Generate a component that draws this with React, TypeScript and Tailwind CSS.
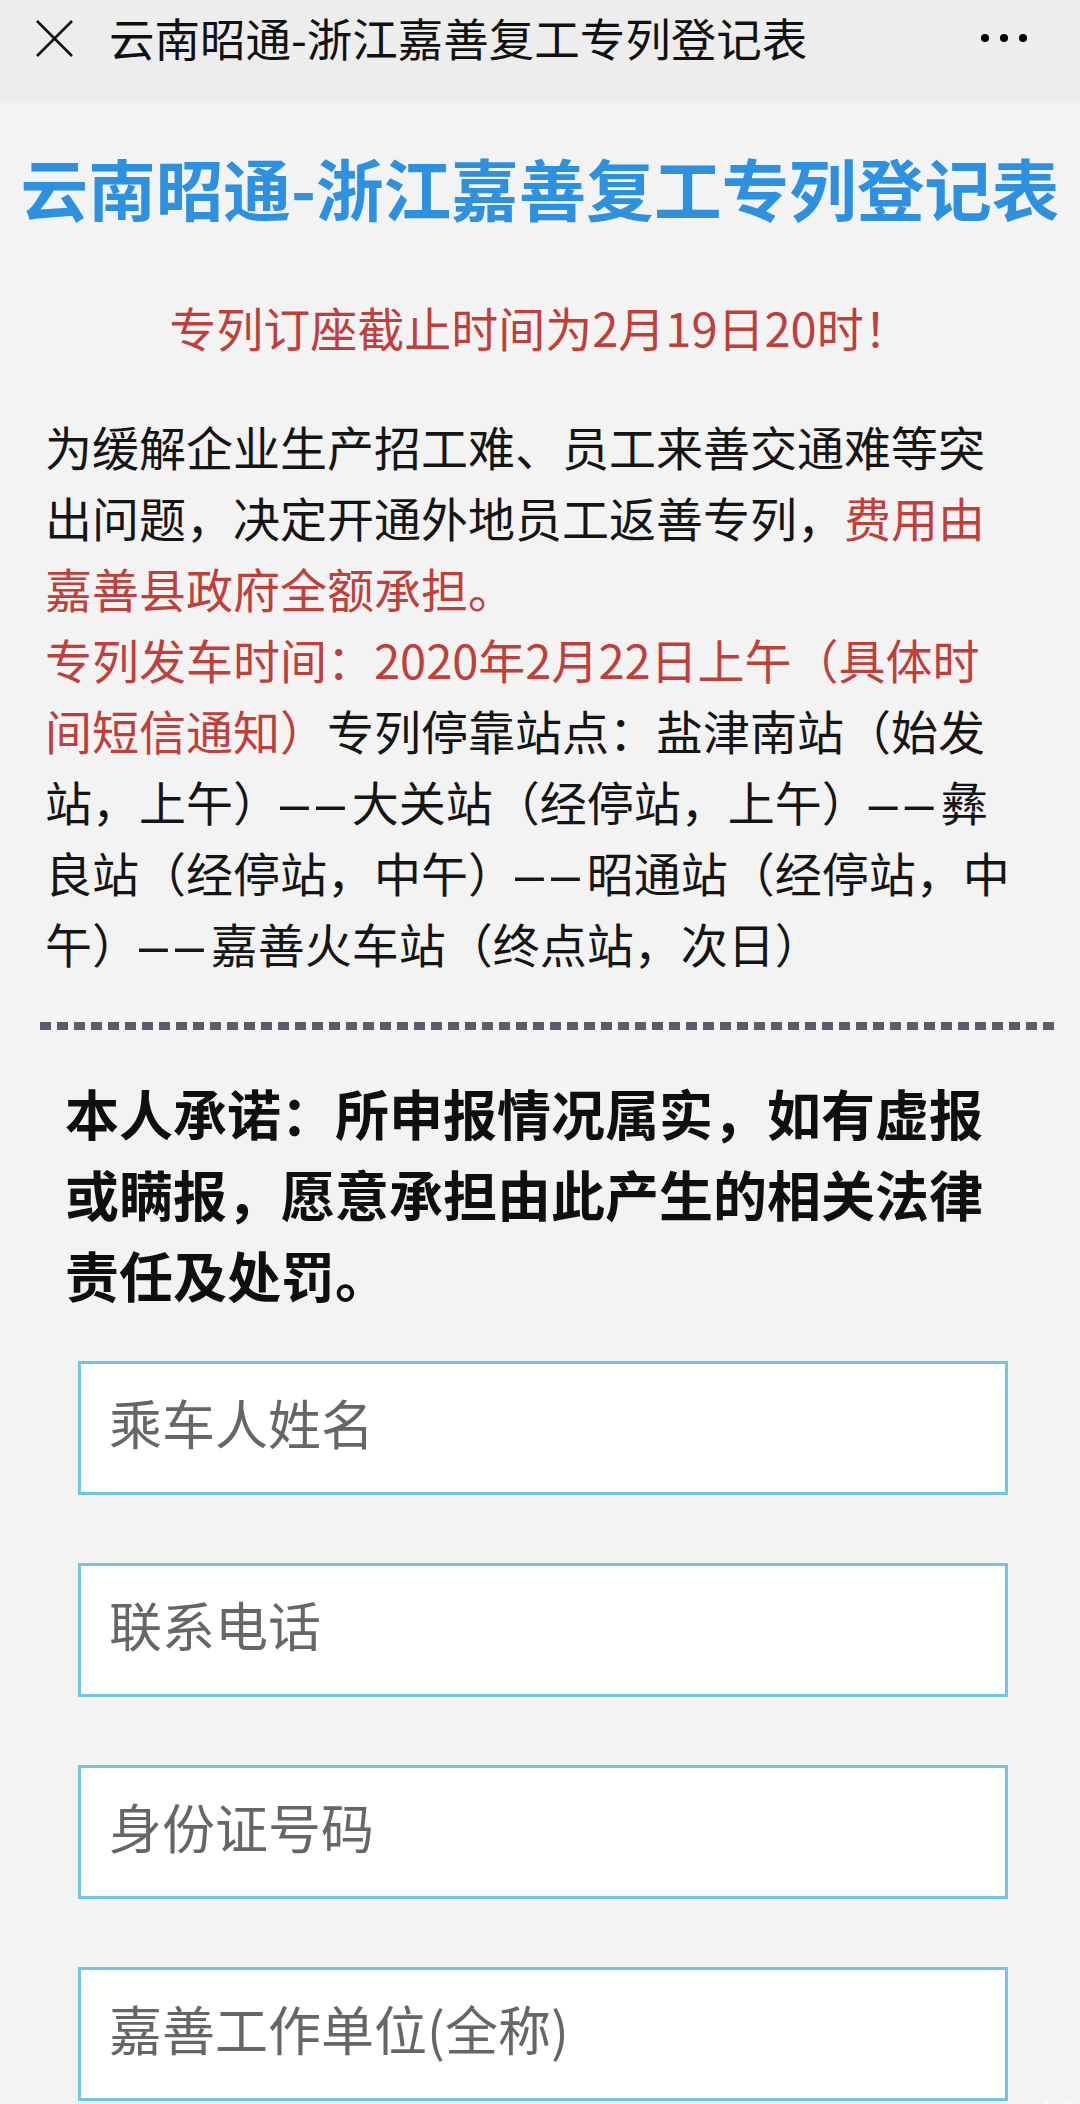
const RED = "text-[#bf3f3a]";

const Dashes = () => (
  <span className="font-['Liberation_Sans',sans-serif] text-[52px] leading-none tracking-[7px]">––</span>
);

const Field = ({ label }: { label: string }) => (
  <input
    readOnly
    placeholder={label}
    className="block h-[134px] w-[930px] border-[3px] border-[#74c4e4] bg-white pl-[28px] pb-[12px] text-[53px] outline-none placeholder:text-[#666666]"
  />
);

const App = () => {
  return (
    <div className="relative h-[2104px] overflow-hidden bg-[#f3f3f4] font-['Noto_Sans_CJK_SC',sans-serif] text-[#151515]">
      {/* Top bar */}
      <header className="h-[103px] bg-[#ededed]">
        <div className="flex h-[76px] items-center">
          <svg className="ml-[36px] h-[37px] w-[37px]" viewBox="0 0 37 37" fill="none" stroke="#111" strokeWidth="2.6">
            <path d="M1 1L36 36M36 1L1 36" />
          </svg>
          <h1 className="ml-[36px] text-[45.5px] leading-none text-[#111]">云南昭通-浙江嘉善复工专列登记表</h1>
          <div className="ml-auto mr-[53px] flex gap-[11px]">
            <span className="h-[8px] w-[8px] rounded-full bg-black" />
            <span className="h-[8px] w-[8px] rounded-full bg-black" />
            <span className="h-[8px] w-[8px] rounded-full bg-black" />
          </div>
        </div>
      </header>

      {/* Heading */}
      <h2 className="mt-[44px] text-center text-[67.6px] font-bold leading-[80px] text-[#2d91df]">
        云南昭通-浙江嘉善复工专列登记表
      </h2>

      <p className={`mt-[67px] text-center text-[47px] leading-[66px] ${RED}`}>
        专列订座截止时间为2月19日20时！
      </p>

      {/* Intro */}
      <p className="ml-[45px] mt-[50px] whitespace-nowrap text-[47px] leading-[71px]">
        为缓解企业生产招工难、员工来善交通难等突
        <br />
        出问题，决定开通外地员工返善专列，<span className={RED}>费用由</span>
        <br />
        <span className={RED}>嘉善县政府全额承担。</span>
        <br />
        <span className={RED}>专列发车时间：2020年2月22日上午（具体时</span>
        <br />
        <span className={RED}>间短信通知）</span>专列停靠站点：盐津南站（始发
        <br />
        站，上午）<Dashes />大关站（经停站，上午）<Dashes />彝
        <br />
        良站（经停站，中午）<Dashes />昭通站（经停站，中
        <br />
        午）<Dashes />嘉善火车站（终点站，次日）
      </p>

      <div className="ml-[40px] mt-[44px] h-[8px] w-[1014px] bg-[repeating-linear-gradient(90deg,#575b6b_0_11px,transparent_11px_17px)]" />

      {/* Promise */}
      <p className="ml-[65px] mt-[42px] w-[940px] text-[54px] font-bold leading-[81px] text-[#0f0f0f]">
        本人承诺：所申报情况属实，如有虚报或瞒报，愿意承担由此产生的相关法律责任及处罚。
      </p>

      {/* Form */}
      <form className="ml-[78px] mt-[46px] flex flex-col gap-[68px]">
        <Field label="乘车人姓名" />
        <Field label="联系电话" />
        <Field label="身份证号码" />
        <Field label="嘉善工作单位(全称)" />
      </form>

      <span className="absolute right-[6px] top-[2090px] font-['Liberation_Sans',sans-serif] text-[30px] font-bold text-white/90">
        1 / 1
      </span>
    </div>
  );
};

export default App;
